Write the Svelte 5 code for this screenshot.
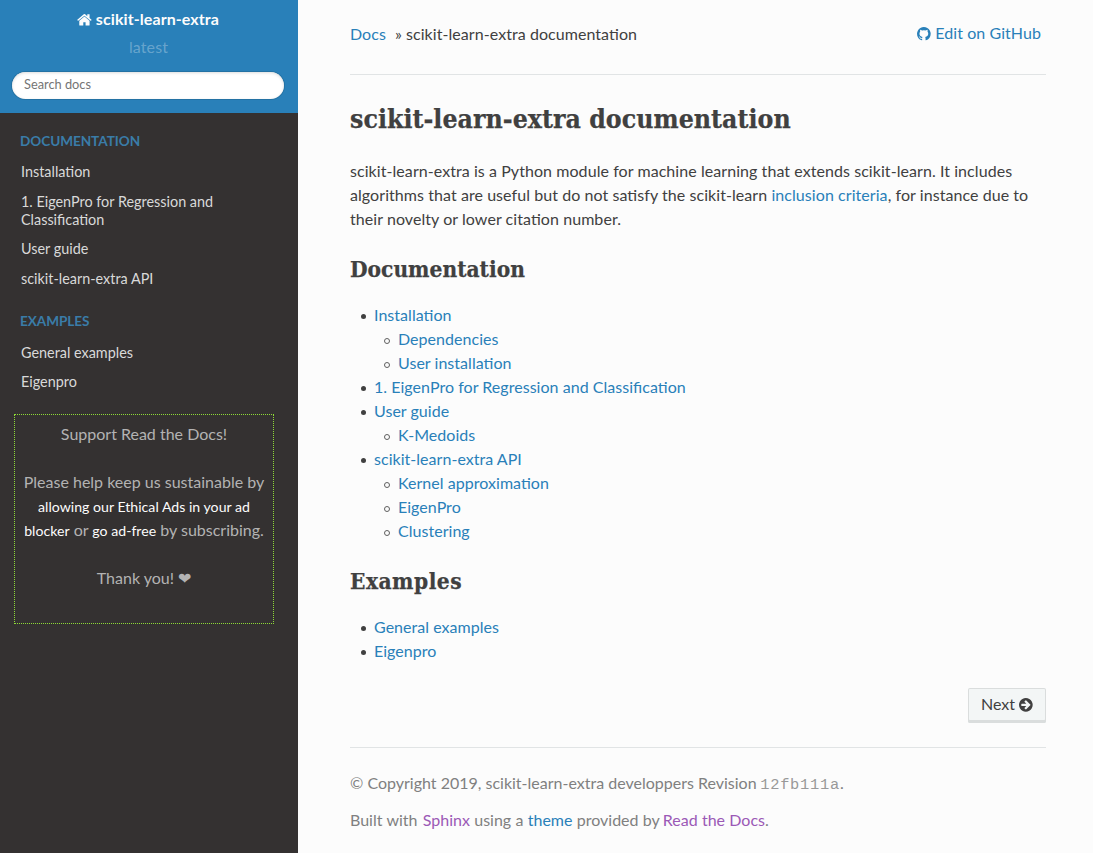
<script>
  const menus = [
    { caption: 'Documentation', items: ['Installation', '1. EigenPro for Regression and Classification', 'User guide', 'scikit-learn-extra API'] },
    { caption: 'Examples', items: ['General examples', 'Eigenpro'] }
  ];
  const sections = [
    {
      title: 'Documentation',
      items: [
        { label: 'Installation', children: ['Dependencies', 'User installation'] },
        { label: '1. EigenPro for Regression and Classification' },
        { label: 'User guide', children: ['K-Medoids'] },
        { label: 'scikit-learn-extra API', children: ['Kernel approximation', 'EigenPro', 'Clustering'] }
      ]
    },
    { title: 'Examples', items: [{ label: 'General examples' }, { label: 'Eigenpro' }] }
  ];
</script>

<div class="page">
  <nav class="side">
    <div class="search">
      <a class="home" href="#top"><svg class="ico-home" viewBox="64 128 1664 1536"><path d="M1472 992v480q0 26-19 45t-45 19h-384v-384h-256v384h-384q-26 0-45-19t-19-45v-480q0-1 .5-3t.5-3l575-474 575 474q1 2 1 6zm223-69l-62 74q-8 9-21 11h-3q-13 0-21-7l-692-577-692 577q-12 8-24 7-13-2-21-11l-62-74q-8-10-7-23.5t11-21.5l719-599q32-26 76-26t76 26l244 204v-195q0-14 9-23t23-9h192q14 0 23 9t9 23v408l219 182q10 8 11 21.5t-7 23.5z" /></svg> scikit-learn-extra</a>
      <div class="version">latest</div>
      <input type="text" placeholder="Search docs" />
    </div>
    <div class="menu">
      {#each menus as m}
        <p class="caption">{m.caption}</p>
        <ul>
          {#each m.items as item}<li><a href="#top">{item}</a></li>{/each}
        </ul>
      {/each}
    </div>
    <div class="promo">
      <p>Support Read the Docs!</p>
      <p>Please help keep us sustainable by <a href="#top">allowing our Ethical Ads in your ad blocker</a> or <a href="#top">go ad-free</a> by subscribing.</p>
      <p>Thank you! ❤</p>
    </div>
  </nav>

  <main>
    <div class="crumbs">
      <div class="trail"><a href="#top">Docs</a><span>»</span> scikit-learn-extra documentation</div>
      <a class="edit" href="#top"><svg class="ico" viewBox="128 128 1536 1536"><path d="M896 128q209 0 385.5 103t279.5 279.5 103 385.5q0 251-146.5 451.5t-378.5 277.5q-27 5-40-7t-13-30q0-3 .5-76.5t.5-134.5q0-97-52-142 57-6 102.5-18t94-39 81-66.5 53-105 20.5-150.5q0-119-79-206 37-91-8-204-28-9-81 11t-92 44l-38 24q-93-26-192-26t-192 26q-16-11-42.5-27t-83.5-38.5-85-13.5q-45 113-8 204-79 87-79 206 0 85 20.5 150t52.5 105 80.5 67 94 39 102.5 18q-39 36-49 103-21 10-45 15t-57 5-65.5-21.5-55.5-62.5q-19-32-48.5-52t-49.5-24l-20-3q-21 0-29 4.5t-5 11.5 9 14 13 12l7 5q22 10 43.5 38t31.5 51l10 23q13 38 44 61.5t67 30 69.5 7 55.5-3.5l23-4q0 38 .5 88.5t.5 54.5q0 18-13 30t-40 7q-232-77-378.5-277.5t-146.5-451.5q0-209 103-385.5t279.5-279.5 385.5-103z" /></svg> Edit on GitHub</a>
    </div>
    <hr />
    <h1>scikit-learn-extra documentation</h1>
    <p class="intro">scikit-learn-extra is a Python module for machine learning that extends scikit-learn. It includes algorithms that are useful but do not satisfy the scikit-learn <a href="#top">inclusion criteria</a>, for instance due to their novelty or lower citation number.</p>
    {#each sections as s}
      <h2>{s.title}</h2>
      <ul class="toc">
        {#each s.items as item}
          <li>
            <a href="#top">{item.label}</a>
            {#if item.children}
              <ul>
                {#each item.children as c}<li><a href="#top">{c}</a></li>{/each}
              </ul>
            {/if}
          </li>
        {/each}
      </ul>
    {/each}
    <footer>
      <div class="pager">
        <a class="next" href="#top">Next <svg class="ico" viewBox="128 128 1536 1536"><path d="M1413 896q0-27-18-45l-91-91-362-362q-18-18-45-18t-45 18l-91 91q-18 18-18 45t18 45l189 189h-502q-26 0-45 19t-19 45v128q0 26 19 45t45 19h502l-189 189q-18 18-18 45t18 45l91 91q18 18 45 18t45-18l362-362 91-91q18-18 18-45zm251 0q0 209-103 385.5t-279.5 279.5-385.5 103-385.5-103-279.5-279.5-103-385.5 103-385.5 279.5-279.5 385.5-103 385.5 103 279.5 279.5 103 385.5z" /></svg></a>
      </div>
      <hr />
      <p class="copy">© Copyright 2019, scikit-learn-extra developpers Revision <code>12fb111a</code>.</p>
      <p class="built">Built with <a class="visited" href="#top">Sphinx</a> using a <a href="#top">theme</a> provided by <a class="visited" href="#top">Read the Docs</a>.</p>
    </footer>
  </main>
</div>

<style>
  :global(body) { margin: 0; background: #fcfcfc; overflow: hidden; }
  * { box-sizing: border-box; }
  .page { display: flex; width: 1093px; height: 853px; overflow: hidden; font: 16px/24px Lato, sans-serif; color: #404040; background: #fcfcfc; font-feature-settings: "liga" 1; }
  a { color: #2980b9; text-decoration: none; }
  p, ul, h1, h2 { margin: 0; padding: 0; }
  svg { fill: currentColor; display: inline-block; }
  .ico { width: 13.71px; height: 13.71px; vertical-align: -1.6px; }
  .edit .ico { margin-right: 0.6px; }
  .ico-home { width: 14.86px; height: 13.71px; vertical-align: -1.6px; }

  .side { width: 298px; flex: none; background: #343131; }
  .search { height: 113px; padding: 7px 14px 0 12px; background: #2980b9; text-align: center; }
  .home { display: block; color: #fcfcfc; font-weight: 700; letter-spacing: 0.08px; }
  .version { margin-top: 4px; padding-left: 1px; color: rgba(255, 255, 255, 0.3); letter-spacing: 0.1px; }
  input { display: block; width: 272px; height: 27px; margin-top: 13px; padding: 0 12px 3px; border: 0; border-radius: 50px; background: #fff; font: 12.8px Lato, sans-serif; box-shadow: inset 0 1px 3px #ddd, 0 0 0 1px #2472a4; outline: 0; }
  input::placeholder { color: #757575; }
  .menu { display: flow-root; height: 301px; padding-top: 0.45px; }
  .caption { padding: 0 20px; margin: 11.55px 0 0.3px; font-size: 13.6px; line-height: 32px; font-weight: 700; letter-spacing: -0.06px; text-transform: uppercase; color: #3a7ca8; }
  .menu ul { list-style: none; }
  .menu ul + .caption { margin-bottom: 0.6px; }
  .menu a { display: block; padding: 5.82px 21px; font-size: 14.4px; line-height: 18px; color: #d9d9d9; }
  .promo { display: flex; flex-direction: column; gap: 24px; width: 260px; height: 210px; margin-left: 14px; padding-top: 7px; border: 1px dotted #8edb36; color: #b3b3b3; text-align: center; }
  .promo a { font-size: 14.1px; line-height: 20px; letter-spacing: 0.02px; color: #fcfcfc; }

  main { width: 800px; flex: none; padding: 21px 52px 0; }
  .crumbs { display: flex; justify-content: space-between; height: 53px; padding-right: 5px; letter-spacing: 0.06px; }
  .trail { padding-top: 1px; }
  .trail span { margin-left: 9px; }
  hr { height: 1px; margin: 0; border: 0; background: #e1e4e5; }
  h1, h2 { font-family: "Roboto Slab", "DejaVu Serif Condensed", "DejaVu Serif", serif; font-stretch: condensed; font-weight: 700; -webkit-text-stroke: 0.25px #404040; }
  h1 { font-size: 26.4px; line-height: 36px; margin: 26px 0 22px; letter-spacing: 0.03px; }
  h2 { font-size: 22.5px; line-height: 32px; margin: 22px 0 18px; }
  .toc + h2 { letter-spacing: 0.5px; }
  .intro { letter-spacing: 0.065px; }
  .toc { letter-spacing: 0.035px; }
  .toc li { margin-left: 24px; list-style: none; }
  .toc li::before { content: ""; display: inline-block; box-sizing: border-box; width: 5px; height: 5px; margin: 0 8.5px 0 -13.5px; border-radius: 50%; background: #404040; vertical-align: 2px; }
  .toc li li::before { width: 6px; height: 6px; margin: 0 8px 0 -14px; border: 1px solid #606060; background: none; vertical-align: 1px; }
  .pager { display: flex; justify-content: flex-end; margin: 25px 0 24px; }
  .next { display: block; width: 78px; height: 35px; padding: 4px 0 0 13px; border-radius: 2px; background: #f3f6f6; color: #404040; white-space: nowrap; box-shadow: inset 0 0 0 1px #dadddd, inset 0 -3px 0 #dadddd; }
  footer { color: #808080; }
  .copy { margin: 23px 0 13px; }
  .built { word-spacing: 0.2px; }
  .built .visited:first-child { margin-left: 1px; }
  .built .visited:last-child { margin-left: -1px; }
  code { font: 15.4px/20px "Courier New", "Liberation Mono", monospace; letter-spacing: 0.74px; color: #999; margin-left: -0.5px; }
  .visited { color: #9b59b6; }
</style>
